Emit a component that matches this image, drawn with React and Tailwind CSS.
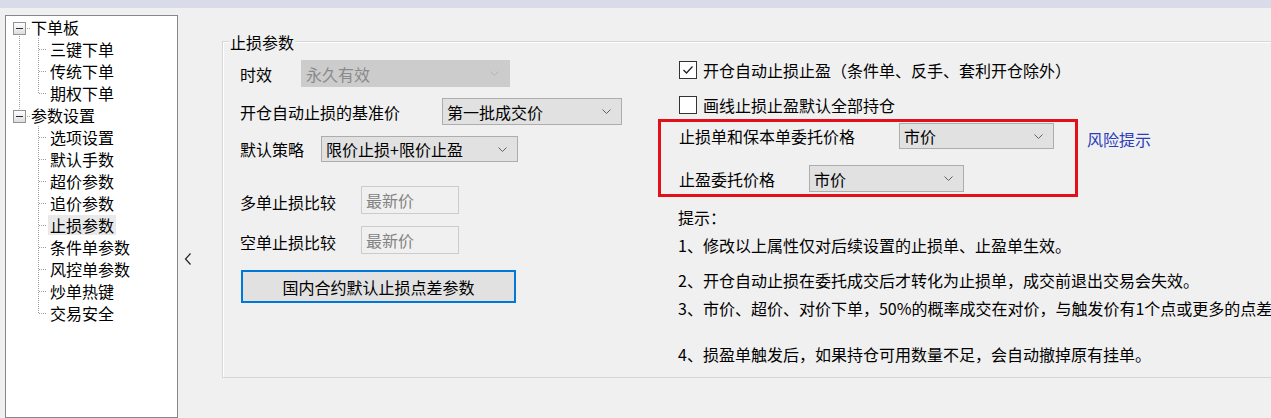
import React from "react";

const tree = [
  { label: "下单板", children: ["三键下单", "传统下单", "期权下单"] },
  {
    label: "参数设置",
    children: ["选项设置", "默认手数", "超价参数", "追价参数", "止损参数", "条件单参数", "风控单参数", "炒单热键", "交易安全"],
  },
];

const dot = { stroke: "#a0a0a0", strokeWidth: 1, strokeDasharray: "1 1", shapeRendering: "crispEdges" };

function ParentRow({ label, first, last }) {
  return (
    <div className="flex items-center h-[22px]">
      <svg width="25" height="22" className="shrink-0">
        <defs>
          <linearGradient id="bx" x1="0" y1="0" x2="0" y2="1">
            <stop offset="0" stopColor="#ffffff" />
            <stop offset="1" stopColor="#dcdcdc" />
          </linearGradient>
        </defs>
        {!first && <line x1="13.5" y1="0" x2="13.5" y2="6" style={dot} />}
        {!last && <line x1="13.5" y1="18" x2="13.5" y2="22" style={dot} />}
        <line x1="19" y1="12.5" x2="25" y2="12.5" style={dot} />
        <rect x="7.5" y="6.5" width="12" height="12" fill="url(#bx)" stroke="#939393" shapeRendering="crispEdges" />
        <line x1="10" y1="12.5" x2="17" y2="12.5" stroke="#2b2b3b" shapeRendering="crispEdges" />
      </svg>
      <span className="leading-[20px]">{label}</span>
    </div>
  );
}

function ChildRow({ label, parentLast, lastChild, selected }) {
  return (
    <div className="flex items-center h-[22px]">
      <svg width="42" height="22" className="shrink-0">
        {!parentLast && <line x1="13.5" y1="0" x2="13.5" y2="22" style={dot} />}
        <line x1="32.5" y1="0" x2="32.5" y2={lastChild ? 12 : 22} style={dot} />
        <line x1="33" y1="11.5" x2="41" y2="11.5" style={dot} />
      </svg>
      <span className={`px-[2px] leading-[20px] ${selected ? "bg-[#e9e9e9]" : ""}`}>{label}</span>
    </div>
  );
}

function Tree() {
  return (
    <div className="ml-[5px] mt-[7px] w-[173px] h-[403px] shrink-0 border border-[#828790] bg-white text-[16px]">
      {tree.map((p, pi) => (
        <div key={p.label}>
          <ParentRow label={p.label} first={pi === 0} last={pi === tree.length - 1} />
          {p.children.map((c, ci) => (
            <ChildRow
              key={c}
              label={c}
              parentLast={pi === tree.length - 1}
              lastChild={ci === p.children.length - 1}
              selected={c === "止损参数"}
            />
          ))}
        </div>
      ))}
    </div>
  );
}

function Select({ value, className, disabled }) {
  return (
    <div
      className={`flex items-center justify-between pl-[4px] pr-[10px] border shrink-0 ${
        disabled ? "bg-[#cccccc] border-[#cccccc] text-[#8a8a8a]" : "bg-[#e1e1e1] border-[#adadad] text-black"
      } ${className}`}
    >
      <span className="leading-[20px]">{value}</span>
      <svg width="9" height="5" viewBox="0 0 9 5">
        <path d="M0.5 0.5 L4.5 4.5 L8.5 0.5" fill="none" stroke={disabled ? "#b3b3b3" : "#606060"} strokeWidth="1" />
      </svg>
    </div>
  );
}

function ReadOnly({ value }) {
  return (
    <div className="w-[98px] h-[28px] shrink-0 border border-[#cccccc] bg-[#f0f0f0] pl-[4px] flex items-center text-[#838383] leading-[20px]">
      {value}
    </div>
  );
}

function Check({ checked, label }) {
  return (
    <div className="flex items-center h-[22px] pl-[21px]">
      <div className="w-[18px] h-[18px] border border-[#333333] bg-white flex items-center justify-center shrink-0">
        {checked && (
          <svg width="14" height="14" viewBox="0 0 14 14">
            <path d="M2.5 7 L5.5 10 L11.5 3.5" fill="none" stroke="#222222" strokeWidth="1.3" />
          </svg>
        )}
      </div>
      <span className="ml-[6px] leading-[20px]">{label}</span>
    </div>
  );
}

function GroupBox() {
  return (
    <div className="mt-[33px] w-[1100px] h-[337px] shrink-0 border border-[#d6d6d6] shadow-[inset_1px_1px_0_#ffffff]">
      <div className="w-fit -mt-[10px] ml-[6px] px-[1px] bg-[#f0f0f0] leading-[20px]">止损参数</div>
      <div className="flex items-start">
        {/* left column */}
        <div className="w-[435px] shrink-0 pl-[17px] flex flex-col">
          <div className="mt-[8px] h-[27px] flex items-center">
            <span className="w-[61px] shrink-0">时效</span>
            <Select value="永久有效" className="w-[209px] h-[27px]" disabled />
          </div>
          <div className="mt-[11px] h-[27px] flex items-center">
            <span className="w-[202px] shrink-0">开仓自动止损的基准价</span>
            <Select value="第一批成交价" className="w-[180px] h-[27px]" />
          </div>
          <div className="mt-[11px] h-[26px] flex items-center">
            <span className="w-[81px] shrink-0">默认策略</span>
            <Select value="限价止损+限价止盈" className="w-[197px] h-[26px]" />
          </div>
          <div className="mt-[24px] h-[28px] flex items-center">
            <span className="w-[121px] shrink-0 pt-[3px]">多单止损比较</span>
            <ReadOnly value="最新价" />
          </div>
          <div className="mt-[12px] h-[28px] flex items-center">
            <span className="w-[121px] shrink-0 pt-[3px]">空单止损比较</span>
            <ReadOnly value="最新价" />
          </div>
          <button className="mt-[16px] ml-[1px] w-[275px] h-[33px] border-2 border-[#0078d7] bg-[#e1e1e1] text-[16px] leading-[20px]">
            国内合约默认止损点差参数
          </button>
        </div>

        {/* right column */}
        <div className="flex flex-col whitespace-nowrap">
          <div className="mt-[7px]">
            <Check checked label="开仓自动止损止盈（条件单、反手、套利开仓除外）" />
          </div>
          <div className="mt-[13px]">
            <Check label="画线止损止盈默认全部持仓" />
          </div>
          <div className="mt-[3px] flex items-start">
            <div className="w-[420px] h-[78px] shrink-0 border-[3px] border-[#e3101b] pl-[18px] flex flex-col">
              <div className="mt-[1px] h-[26px] flex items-center">
                <span className="w-[220px] shrink-0">止损单和保本单委托价格</span>
                <Select value="市价" className="w-[155px] h-[26px]" />
              </div>
              <div className="mt-[16px] h-[27px] flex items-center">
                <span className="w-[130px] shrink-0">止盈委托价格</span>
                <Select value="市价" className="w-[155px] h-[27px]" />
              </div>
            </div>
            <span className="ml-[9px] mt-[9px] leading-[22px] text-[#2a3dbb]">风险提示</span>
          </div>
          <div className="pl-[20px] leading-[20px] flex flex-col">
            <div className="mt-[10px]">提示：</div>
            <div className="mt-[8px]">1、修改以上属性仅对后续设置的止损单、止盈单生效。</div>
            <div className="mt-[15px]">2、开仓自动止损在委托成交后才转化为止损单，成交前退出交易会失效。</div>
            <div className="mt-[8px]">3、市价、超价、对价下单，50%的概率成交在对价，与触发价有1个点或更多的点差</div>
            <div className="mt-[26px]">4、损盈单触发后，如果持仓可用数量不足，会自动撤掉原有挂单。</div>
          </div>
        </div>
      </div>
    </div>
  );
}

export default function App() {
  return (
    <div className="w-[1271px] h-[418px] overflow-hidden bg-[#f0f0f0] text-black text-[16px] font-['Noto_Sans_CJK_SC','Noto_Sans',sans-serif]">
      <div className="h-[8px] bg-[#dadbe9]" />
      <div className="flex items-start">
        <Tree />
        <div className="w-[44px] shrink-0 pt-[244px] pl-[6px]">
          <svg width="8" height="14" viewBox="0 0 8 14">
            <path d="M6.5 1.5 L1.5 7 L6.5 12.5" fill="none" stroke="#222222" strokeWidth="1.2" />
          </svg>
        </div>
        <GroupBox />
      </div>
    </div>
  );
}
